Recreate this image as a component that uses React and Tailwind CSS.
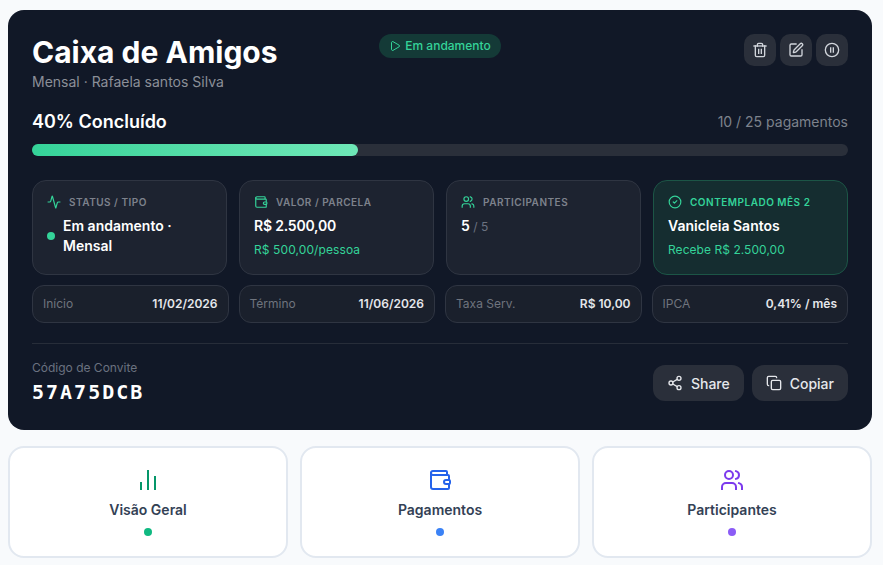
import { Activity, ChartNoAxesColumn, CircleCheck, CirclePause, Copy, Play, Share2, SquarePen, Trash2, Users, Wallet } from "lucide-react";

const FONT = "font-['Inter',sans-serif]";

const FACTS = [
  { label: "Início", value: "11/02/2026" },
  { label: "Término", value: "11/06/2026" },
  { label: "Taxa Serv.", value: "R$ 10,00" },
  { label: "IPCA", value: "0,41% / mês" },
];

const TABS = [
  { label: "Visão Geral", Icon: ChartNoAxesColumn, icon: "text-[#059669]", dot: "bg-[#10b981]" },
  { label: "Pagamentos", Icon: Wallet, icon: "text-[#2563eb]", dot: "bg-[#3b82f6]" },
  { label: "Participantes", Icon: Users, icon: "text-[#7c3aed]", dot: "bg-[#8b5cf6]" },
];

function IconButton({ Icon }) {
  return (
    <button type="button" className="flex h-8 w-8 items-center justify-center rounded-[10px] bg-[#2a2f3a] text-[#d1d5db]">
      <Icon size={16} strokeLinecap="square" />
    </button>
  );
}

function StatCard({ Icon, label, accent, children }) {
  return (
    <div className={`h-[95px] rounded-[14px] border px-[14px] pt-[14px] ${accent ? "border-[#1c5546] bg-[#152d30]" : "border-[#2f3542] bg-[#1d2330]"}`}>
      <div className="flex h-[14px] items-center gap-2">
        <Icon size={14} strokeLinecap="square" className="text-[#34d399]" />
        <span className={`text-[10px] font-semibold tracking-[0.5px] ${accent ? "text-[#34d399]" : "text-[#7d828c]"}`}>{label}</span>
      </div>
      {children}
    </div>
  );
}

export default function App() {
  return (
    <div className={`${FONT} h-[565px] overflow-hidden bg-[#f8fafc] pt-[10px] pr-[11px] pl-2`}>
      <section className="h-[420px] rounded-2xl bg-[#111827] px-6 pt-6 text-white">
        <div className="grid h-[60px] grid-cols-[1fr_auto_1fr] items-start">
          <div>
            <h1 className="text-[30px] leading-[36px] font-bold">Caixa de Amigos</h1>
            <p className="mt-[2px] text-[14px] leading-[20px] text-[#8b8f98]">Mensal · Rafaela santos Silva</p>
          </div>
          <div className="flex h-6 items-center gap-1 rounded-full bg-[#143a37] px-[10px] text-[12px] font-medium text-[#34d399]">
            <Play size={12} />
            Em andamento
          </div>
          <div className="flex justify-end gap-1">
            <IconButton Icon={Trash2} />
            <IconButton Icon={SquarePen} />
            <IconButton Icon={CirclePause} />
          </div>
        </div>

        <div className="mt-[15px] flex h-6 items-center justify-between">
          <span className="text-[18px] font-semibold">40% Concluído</span>
          <span className="text-[14px] text-[#7d828c]">10 / 25 pagamentos</span>
        </div>
        <div className="mt-[11px] h-3 rounded-full bg-[#2a2f3a]">
          <div className="h-3 w-[40%] rounded-full bg-gradient-to-r from-[#34d399] to-[#6ee7b7]" />
        </div>

        <div className="mt-6 grid grid-cols-4 gap-3">
          <StatCard Icon={Activity} label="STATUS / TIPO">
            <div className="mt-[7px] flex items-center gap-2">
              <span className="h-2 w-2 shrink-0 rounded-full bg-[#34d399]" />
              <span className="text-[14px] leading-[20px] font-semibold">Em andamento · Mensal</span>
            </div>
          </StatCard>
          <StatCard Icon={Wallet} label="VALOR / PARCELA">
            <p className="mt-[7px] text-[14px] leading-[20px] font-semibold tracking-[-0.2px]">R$ 2.500,00</p>
            <p className="mt-[6px] text-[12px] leading-[16px] tracking-[0.1px] text-[#34d399]">R$ 500,00/pessoa</p>
          </StatCard>
          <StatCard Icon={Users} label="PARTICIPANTES">
            <p className="mt-[7px] text-[14px] leading-[20px] font-semibold">
              5 <span className="text-[12px] font-normal text-[#6b7280]">/ 5</span>
            </p>
          </StatCard>
          <StatCard Icon={CircleCheck} label="CONTEMPLADO MÊS 2" accent>
            <p className="mt-[7px] text-[14px] leading-[20px] font-semibold">Vanicleia Santos</p>
            <p className="mt-[6px] text-[12px] leading-[16px] tracking-[0.05px] text-[#34d399]">Recebe R$ 2.500,00</p>
          </StatCard>
        </div>

        <div className="mt-[10px] grid grid-cols-4 gap-[10px]">
          {FACTS.map((f) => (
            <div key={f.label} className="flex h-[38px] items-center justify-between rounded-xl border border-[#2f3542] bg-[#1a202c] px-[10px]">
              <span className="text-[12px] text-[#6f747e]">{f.label}</span>
              <span className="text-[12px] font-semibold text-[#e5e7eb]">{f.value}</span>
            </div>
          ))}
        </div>

        <div className="mt-5 flex items-center justify-between border-t border-[#272d39] pt-4">
          <div>
            <p className="text-[12px] leading-[16px] text-[#6b7280]">Código de Convite</p>
            <p className="mt-[2px] font-['DejaVu_Sans_Mono',monospace] text-[20px] leading-[28px] font-bold tracking-[2px]">57A75DCB</p>
          </div>
          <div className="flex gap-2">
            <button type="button" className="flex h-9 items-center gap-2 rounded-xl bg-[#2a2f3a] px-[14px] text-[14px] font-medium text-[#e5e7eb]">
              <Share2 size={16} />
              Share
            </button>
            <button type="button" className="flex h-9 items-center gap-2 rounded-xl bg-[#2a2f3a] px-[14px] text-[14px] font-medium text-[#e5e7eb]">
              <Copy size={16} />
              Copiar
            </button>
          </div>
        </div>
      </section>

      <nav className="mt-4 grid grid-cols-3 gap-3">
        {TABS.map(({ label, Icon, icon, dot }) => (
          <button key={label} type="button" className="flex h-[112px] flex-col items-center rounded-2xl border-2 border-[#e2e8f0] bg-white pt-[20px]">
            <Icon size={24} strokeLinecap="square" className={icon} />
            <span className="mt-[8px] text-[14px] leading-[20px] font-semibold text-[#334155]">{label}</span>
            <span className={`mt-[8px] h-2 w-2 rounded-full ${dot}`} />
          </button>
        ))}
      </nav>
    </div>
  );
}
